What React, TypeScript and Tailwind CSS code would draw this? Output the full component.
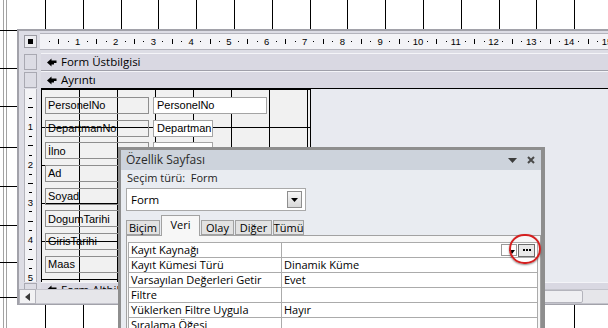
const pageCols = [
  "w-[46px]", "w-[38px]", "w-[38px]", "w-[37px]", "w-[38px]", "w-[38px]", "w-[38px]", "w-[38px]",
  "w-[37px]", "w-[38px]", "w-[38px]", "w-[38px]", "w-[38px]", "w-[37px]", "w-[38px]",
];

const marginCells = ["h-[2px]", "h-[38px]", "h-[38px]", "h-[41px]", "h-[39px]", "h-[39px]", "h-[37px]", "h-[35px]"];

// box text only where the property sheet does not cover it
const fields = [
  { label: "PersonelNo", box: "PersonelNo", w: "w-[114px]" },
  { label: "DepartmanNo", box: "Departman", w: "w-[60px]" },
  { label: "İlno", box: "", w: "w-[60px]" },
  { label: "Ad", box: "", w: "w-[114px]" },
  { label: "Soyad", box: "", w: "w-[114px]" },
  { label: "DogumTarihi", box: "", w: "w-[80px]" },
  { label: "GirisTarihi", box: "", w: "w-[80px]" },
  { label: "Maas", box: "", w: "w-[80px]" },
];

const props = [
  ["Kayıt Kaynağı", ""],
  ["Kayıt Kümesi Türü", "Dinamik Küme"],
  ["Varsayılan Değerleri Getir", "Evet"],
  ["Filtre", ""],
  ["Yüklerken Filtre Uygula", "Hayır"],
  ["Sıralama Öğesi", ""],
  ["Yüklerken Sıralama Uygula", "Evet"],
];

const tabs = [
  { name: "Biçim", w: "w-[34px]" },
  { name: "Veri", w: "w-[39px]", active: true },
  { name: "Olay", w: "w-[33px]" },
  { name: "Diğer", w: "w-[37px]" },
  { name: "Tümü", w: "w-[31px]" },
];

function PageGrid({ h }: { h: string }) {
  return (
    <div className={"flex shrink-0 " + h}>
      {pageCols.map((w, i) => (
        <div key={i} className={w + " shrink-0 border-r border-black"} />
      ))}
    </div>
  );
}

function SectionIcon() {
  return (
    <svg width="10" height="9" viewBox="0 0 10 9" className="shrink-0">
      <path d="M0 4.5 L4.5 0.5 L4.5 2.5 L9.5 2.5 L9.5 5 L7 5 L7 6.5 L4.5 6.5 L4.5 8.5 Z" fill="#000" />
    </svg>
  );
}

function SectionBar({ title, last, footer }: { title: string; last?: boolean; footer?: boolean }) {
  return (
    <div className="flex h-[18px] shrink-0">
      <div className="w-[22px] shrink-0 pl-[5px] py-px">
        <div className="w-[13px] h-full border border-[#a9a9b2] bg-[#dcdce4]" />
      </div>
      <div
        className={
          "flex-1 flex gap-[4px] pl-[6px] bg-[#d9d8e2] border-t border-[#f4f4f8] border-b text-[11.5px] " +
          (last ? "border-b-black " : "border-b-[#a0a0aa] ") +
          (footer ? "items-start pt-[2px] leading-[10px]" : "items-center")
        }
      >
        <SectionIcon />
        <span className="whitespace-nowrap">{title}</span>
      </div>
    </div>
  );
}

function RulerCell({ n }: { n: number }) {
  return (
    <div className="w-[37.8px] shrink-0 grid grid-cols-4 items-center justify-items-center">
      <span className="w-px h-px bg-black" />
      <span className="w-px h-[5px] bg-black" />
      <span className="w-px h-px bg-black" />
      <span className="text-[9.5px] leading-none whitespace-nowrap">{n}</span>
    </div>
  );
}

function VRulerCell({ n }: { n: number }) {
  return (
    <div className="h-[37.8px] shrink-0 grid grid-rows-4 items-center justify-items-center">
      <span className="w-[3px] h-px bg-black" />
      <span className="w-[5px] h-px bg-black" />
      <span className="w-[3px] h-px bg-black" />
      <span className="text-[9.5px] leading-none">{n}</span>
    </div>
  );
}

export default function App() {
  return (
    <div className="relative w-[608px] h-[328px] overflow-hidden bg-white bg-[linear-gradient(to_right,transparent_3px,#a3a3a3_3px,#a3a3a3_4px,transparent_4px,transparent_6px,#a3a3a3_6px,#a3a3a3_7px,transparent_7px)] bg-no-repeat bg-[size:8px_100%] flex flex-col font-['Open_Sans'] text-black">
      <PageGrid h="h-[29px]" />

      <div className="flex h-[276px] shrink-0">
        {/* table rows in the page margin */}
        <div className="w-[17px] shrink-0 flex flex-col">
          {marginCells.map((h, i) => (
            <div key={i} className={h + " shrink-0 border-b border-black"} />
          ))}
        </div>

        {/* Access form design window */}
        <div className="flex-1 min-w-0 flex flex-col border-t-2 border-l-2 border-b border-[#a2a2aa] bg-[#dddde5]">
          <div className="flex h-[17px] shrink-0 mt-[2px] mb-[3px]">
            <div className="w-[21px] shrink-0 flex items-center pl-[5px]">
              <div className="w-[13px] h-[13px] border border-[#9a9aa2] bg-[#ececf0] flex items-center justify-center">
                <div className="w-[5px] h-[5px] bg-black" />
              </div>
            </div>
            <div className="flex-1 flex bg-[#f3f3f6] border-y border-[#b4b4bc] pl-[4.7px] overflow-hidden font-['Liberation_Sans']">
              {Array.from({ length: 15 }, (_, i) => (
                <RulerCell key={i} n={i + 1} />
              ))}
            </div>
          </div>

          <SectionBar title="Form Üstbilgisi" />
          <SectionBar title="Ayrıntı" last />

          <div className="flex h-[193px] shrink-0">
            <div className="w-[22px] shrink-0 pl-[5px] flex">
              <div className="w-[13px] bg-[#f3f3f6] border-x border-[#b4b4bc] flex flex-col pt-[4.7px] overflow-hidden font-['Liberation_Sans']">
                {Array.from({ length: 5 }, (_, i) => (
                  <VRulerCell key={i} n={i + 1} />
                ))}
              </div>
            </div>
            <div className="w-[270px] shrink-0 border-r border-black bg-[#f1f1f1] bg-[linear-gradient(to_right,#000_1px,transparent_1px),linear-gradient(to_bottom,#000_1px,transparent_1px)] bg-[size:38px_38px] flex flex-col gap-[5.7px] pt-[8px] pl-[4px] font-['Liberation_Sans'] text-[11px]">
              {fields.map((f) => (
                <div key={f.label} className="flex h-[17px] shrink-0">
                  <div className="w-[104px] shrink-0 border border-[#8e8e8e] pl-[2px] flex items-center whitespace-nowrap">
                    {f.label}
                  </div>
                  <div className={f.w + " ml-[4px] shrink-0 bg-white border border-[#a4a4a4] pl-[3px] flex items-center whitespace-nowrap"}>
                    {f.box}
                  </div>
                </div>
              ))}
            </div>
            <div className="flex-1 bg-[#e8eaf0]" />
          </div>

          <div className="h-[7px] shrink-0 overflow-hidden">
            <SectionBar title="Form Altbilgisi" footer />
          </div>

          <div className="flex h-[15px] shrink-0">
            <div className="w-[17px] shrink-0 border border-[#b4b4bc] bg-[#f2f2f4] flex items-center justify-center">
              <svg width="5" height="8" viewBox="0 0 5 8">
                <path d="M5 0 L0 4 L5 8 Z" fill="#3a3a3a" />
              </svg>
            </div>
            <div className="flex-1 flex bg-[#e6e6ea] border-y border-[#c4c4cc]">
              <div className="ml-[506px] w-[41px] shrink-0 bg-[#efeff2] border border-[#b4b4bc] rounded-[2px]" />
            </div>
          </div>
        </div>
      </div>

      <PageGrid h="flex-1" />

      {/* Property sheet (floating) */}
      <div className="absolute left-[118px] top-[147px] w-[427px] h-[190px] border-[3px] border-r-[4px] border-[#8e8e8e] bg-[#e9ecf1] flex flex-col text-[11px]">
        <div className="h-[20px] shrink-0 bg-[#cdd3dc] flex items-center pl-[5px] pr-[6px]">
          <span className="text-[12px] text-[#2b2b2b]">Özellik Sayfası</span>
          <svg width="9" height="5" viewBox="0 0 9 5" className="ml-auto">
            <path d="M0 0 L9 0 L4.5 5 Z" fill="#3c3c3c" />
          </svg>
          <svg width="8" height="8" viewBox="0 0 8 8" className="ml-[10px]">
            <path d="M1 1 L7 7 M7 1 L1 7" stroke="#4a4a4a" strokeWidth="2" />
          </svg>
        </div>

        <div className="flex-1 flex flex-col pl-[5px] min-h-0">
          <div className="h-[14px] mt-px pl-px flex items-center whitespace-pre text-[#1e1e1e]">Seçim türü:  Form</div>
          <div className="mt-[3px] w-[180px] h-[23px] shrink-0 bg-white border border-[#a9a9a9] flex items-center pl-[4px] pr-[3px]">
            <span className="text-[11.5px]">Form</span>
            <div className="ml-auto w-[15px] h-[17px] border border-[#8e8e8e] bg-[linear-gradient(#f7f7f7,#d8d8d8)] flex items-center justify-center">
              <svg width="7" height="4" viewBox="0 0 7 4">
                <path d="M0 0 L7 0 L3.5 4 Z" fill="#000" />
              </svg>
            </div>
          </div>

          <div className="mt-[4px] h-[20px] shrink-0 flex items-end gap-px">
            {tabs.map((t) => (
              <div
                key={t.name}
                className={
                  t.w +
                  " shrink-0 flex justify-center border border-[#a2a2a2] text-[11px] leading-none " +
                  (t.active
                    ? "h-[21px] -mb-px relative z-10 border-b-0 bg-[#f7f7f7] items-start pt-[3px]"
                    : "h-[15px] bg-[#e2e2e2] items-center")
                }
              >
                {t.name}
              </div>
            ))}
          </div>

          <div className="flex-1 border border-[#a2a2a2] bg-[#f7f7f7] pt-[6px] pl-px pr-[2px]">
            <div className="border-x border-t border-[#ababab] bg-white">
              {props.map(([k, v], i) => (
                <div key={k} className="flex h-[15px] border-b border-[#ababab]">
                  <div className="w-[153px] shrink-0 border-r border-[#ababab] pl-[2px] flex items-center whitespace-nowrap">
                    {k}
                  </div>
                  <div className="flex-1 flex items-center pl-[2px] pr-[2px] whitespace-nowrap">
                    {v}
                    {i === 0 && (
                      <div className="ml-auto flex items-center gap-px">
                        <div className="w-[16px] h-[12px] bg-white border border-[#9a9a9a] flex items-end justify-end pr-px pb-px">
                          <svg width="6" height="4" viewBox="0 0 6 4">
                            <path d="M0 0 L6 0 L3 4 Z" fill="#000" />
                          </svg>
                        </div>
                        <div className="w-[17px] h-[13px] bg-[#e9e9e9] border border-[#6e6e6e] flex items-center justify-center gap-px">
                          <span className="w-[2px] h-[2px] bg-black" />
                          <span className="w-[2px] h-[2px] bg-black" />
                          <span className="w-[2px] h-[2px] bg-black" />
                        </div>
                      </div>
                    )}
                  </div>
                </div>
              ))}
            </div>
          </div>
        </div>
      </div>

      {/* red highlight circle */}
      <div className="absolute left-[509px] top-[234px] w-[32px] h-[30px] rounded-full border-[2.5px] border-[#d42020] shadow-[0_1px_2px_rgba(0,0,0,0.45)]" />
    </div>
  );
}
